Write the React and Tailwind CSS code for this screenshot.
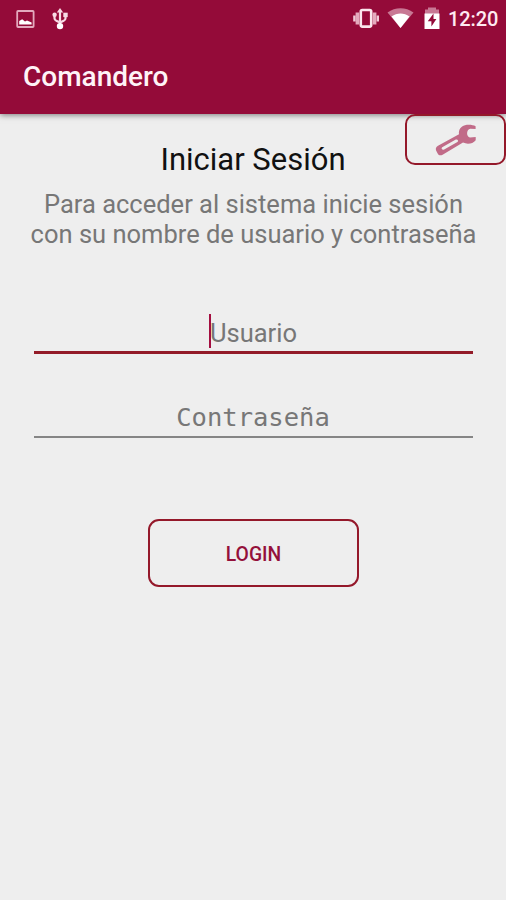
import React from 'react';

function StatusBar() {
  return (
    <div className="flex h-[37px] items-center justify-between pl-4 pr-2 text-white">
      <div className="flex items-center">
        <svg width="19" height="18" viewBox="0 0 19 18" fill="none">
          <rect x="1.2" y="1" width="16.4" height="16" rx="0.8" stroke="#e3a9bd" strokeWidth="1.8" />
          <path d="M3.2 14.5V11l3-1.8 2.8 2.3 2-1 4.6 2v2z" fill="#fff" />
        </svg>
        <svg className="ml-[17px]" width="16" height="22" viewBox="0 0 16 22" fill="none">
          <path d="M8 3v15M2.5 7v3.2c0 1.4.6 2 1.8 2.5L8 14.5l3.7-1.8c1.2-.5 1.8-1.1 1.8-2.5V7" stroke="#f8dbe5" strokeWidth="2.2" />
          <path d="M8 0l3.2 4.5H4.8z" fill="#f8dbe5" />
          <circle cx="2.6" cy="6.7" r="2.2" fill="#f8dbe5" />
          <rect x="11.3" y="4.7" width="4.4" height="4.4" fill="#f8dbe5" />
          <circle cx="8" cy="18.1" r="3.2" fill="#fff" />
        </svg>
      </div>
      <div className="flex items-center">
        <svg width="28" height="22" viewBox="0 0 28 22" fill="none">
          <rect x="8.8" y="2" width="10.4" height="16.6" rx="1.5" stroke="#fbe7ed" strokeWidth="2.6" />
          <path d="M5.4 4.5v12M22.6 4.5v12" stroke="#e5aabd" strokeWidth="3.6" />
          <path d="M2.4 7.5v6M25.8 7.5v6" stroke="#efcbd7" strokeWidth="2.4" />
        </svg>
        <svg className="ml-[7px]" width="27" height="21" viewBox="0 0 27 21">
          <path d="M.5 4.5C8-1.2 19-1.2 26.5 4.5L13.5 20z" fill="#c87894" />
          <path d="M4.5 8.6C10 4.6 17 4.6 22.5 8.6L13.5 20z" fill="#fff" />
        </svg>
        <svg className="ml-[10px]" width="16" height="23" viewBox="0 0 16 23">
          <path d="M1 2.6h3V.5h8v2.1h3V7H1z" fill="#c87894" />
          <path d="M.5 6.5h15V22H.5z" fill="#fff" />
          <path d="M9.5 6.5L3.8 14.2h3.6v5.3L12.4 12H9.5z" fill="#940b39" />
        </svg>
        <span className="ml-[8px] mt-px w-[50px] whitespace-nowrap text-[20px] font-medium leading-[22px] tracking-[-0.1px] text-[#ffeaf1]">12:20</span>
      </div>
    </div>
  );
}

function Wrench() {
  return (
    <svg width="42" height="32" viewBox="0 0 42 32">
      <path
        fillRule="evenodd"
        fill="#c16b88"
        d="M40.6 2.2C38 .8 33.5.2 30 1.2c-4.3 1.3-6.6 4.6-6 9L3 21.8c-2.1 1.2-2.7 2.9-1.8 4.9l1.6 3c1 1.8 2.8 2.1 4.8 1L28 18.6c4.5 2.1 9.8 1.2 12.7-2.4V13l-5.7.6c-1.9-.6-2.9-2.4-2.9-4.3 0-2.2 1.2-4 3.2-4.5l5.3.2zM7.2 23.2l13.6-7.6c1.7-.8 3.2 1.2 1.6 2.4L9.2 25.6c-1.9.9-3.5-1.2-2-2.4z"
      />
    </svg>
  );
}

export default function App() {
  return (
    <div className="flex h-[900px] w-[506px] flex-col overflow-hidden bg-[#eeeeee] font-['Roboto',sans-serif]">
      <header className="h-[114px] shrink-0 bg-[#940b39] shadow-[0_1px_6px_rgba(0,0,0,0.5)]">
        <StatusBar />
        <h1 className="mt-[23px] pl-[23px] text-[28px] font-medium leading-[34px] text-[#fff3f7]">Comandero</h1>
      </header>
      <main className="relative flex flex-col items-center">
        <button aria-label="Configuración" className="absolute right-0 top-0 flex h-[51px] w-[101px] items-center justify-center rounded-[10px] border-2 border-[#94182a]">
          <Wrench />
        </button>
        <h2 className="mt-[28px] text-[31px] leading-[36px] text-[#111]">Iniciar Sesión</h2>
        <p className="mt-[12px] whitespace-nowrap pl-px text-center text-[25.5px] leading-[29.5px] text-[#777]">
          Para acceder al sistema inicie sesión<br />con su nombre de usuario y contraseña
        </p>
        <div className="mt-[65px] flex h-[40px] w-[439px] justify-center border-b-[3px] border-[#931b28]">
          <div className="flex h-[34px] items-center border-l-2 border-[#a40e40]">
            <span className="-ml-[1px] mt-[3px] text-[25.5px] leading-[30px] text-[#777]">Usuario</span>
          </div>
        </div>
        <div className="mt-[44px] flex h-[40px] w-[439px] justify-center border-b-2 border-[#858585]">
          <span className="font-['DejaVu_Sans_Mono',monospace] text-[25.5px] leading-[38px] text-[#777]">Contraseña</span>
        </div>
        <button className="ml-px mt-[81px] flex h-[68px] w-[211px] items-center justify-center rounded-[11px] border-[2.5px] border-[#94182a] pt-[4px] text-[19.3px] font-medium text-[#94103a]">
          LOGIN
        </button>
      </main>
    </div>
  );
}
